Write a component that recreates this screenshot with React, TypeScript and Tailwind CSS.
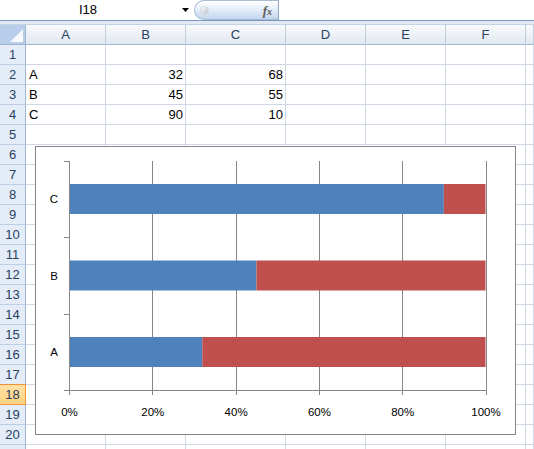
import type { ReactNode } from "react";

const colTemplate = "grid grid-cols-[26px_80px_80px_100px_80px_80px_80px_1fr]";
const columns = ["A", "B", "C", "D", "E", "F", ""];

const data: Record<number, [string, string, string]> = {
  2: ["A", "32", "68"],
  3: ["B", "45", "55"],
  4: ["C", "90", "10"],
};

// row 21 only peeks in at the bottom edge, its number is not visible
const rows = Array.from({ length: 21 }, (_, i) => i + 1);

// chart geometry (relative to chart content box)
const axisX = 33;
const plotW = 416.5;
const axisTop = 14;
const axisBottom = 243;
const categories = [
  { label: "C", center: 52, blue: 90 },
  { label: "B", center: 128.5, blue: 45 },
  { label: "A", center: 205, blue: 32 },
];
const pct = [0, 20, 40, 60, 80, 100];

function Cell({ children, right }: { children?: ReactNode; right?: boolean }) {
  return (
    <div
      className={`h-[20px] border-r border-b border-[#D0D7E5] px-[2px] text-[13px] leading-[19px] text-black whitespace-nowrap overflow-hidden ${
        right ? "text-right" : "text-left pl-[3px]"
      }`}
    >
      {children}
    </div>
  );
}

function BarChart() {
  const xAt = (p: number) => axisX + (plotW * p) / 100;
  return (
    <div className="absolute left-[35px] top-[146px] w-[481px] h-[289px] border border-[#868686] bg-white">
      <svg
        width="479"
        height="287"
        className="block font-['Liberation_Sans',Arial,sans-serif] text-[11.5px]"
      >
        {/* vertical gridlines */}
        {pct.slice(1).map((p) => (
          <line
            key={p}
            x1={Math.round(xAt(p)) + 0.5}
            x2={Math.round(xAt(p)) + 0.5}
            y1={axisTop}
            y2={axisBottom}
            stroke="#868686"
          />
        ))}

        {/* bars */}
        {categories.map((c) => (
          <g key={c.label}>
            <rect x={axisX + 0.5} y={c.center - 15} width={xAt(c.blue) - axisX - 0.5} height={30} fill="#4F81BD" />
            <rect x={xAt(c.blue)} y={c.center - 15} width={xAt(100) - xAt(c.blue)} height={30} fill="#C0504D" />
            <text x={18} y={c.center + 4} textAnchor="middle" fill="#000">
              {c.label}
            </text>
          </g>
        ))}

        {/* vertical axis */}
        <line x1={axisX + 0.5} x2={axisX + 0.5} y1={axisTop} y2={axisBottom} stroke="#868686" />
        {[14, 90, 167, 243].map((y) => (
          <line key={y} x1={28} x2={axisX} y1={y + 0.5} y2={y + 0.5} stroke="#868686" />
        ))}

        {/* horizontal axis */}
        <line x1={29} x2={Math.round(xAt(100)) + 1} y1={axisBottom + 0.5} y2={axisBottom + 0.5} stroke="#868686" />
        {pct.map((p) => (
          <g key={p}>
            <line
              x1={Math.round(xAt(p)) + 0.5}
              x2={Math.round(xAt(p)) + 0.5}
              y1={axisBottom}
              y2={axisBottom + 5}
              stroke="#868686"
            />
            <text x={xAt(p) + 0.5} y={269} textAnchor="middle" fill="#000">
              {p}%
            </text>
          </g>
        ))}
      </svg>
    </div>
  );
}

export default function App() {
  return (
    <div className="relative w-[534px] h-[449px] overflow-hidden bg-white font-['Liberation_Sans',Arial,sans-serif]">
      {/* Formula bar */}
      <div className="flex h-[21px] border-b border-[#7C97BD] bg-white">
        <div className="w-[176px] text-center text-[13px] leading-[20px] text-black">I18</div>
        <div className="w-[18px] flex items-center justify-center">
          <svg width="7" height="4" viewBox="0 0 7 4">
            <path d="M0 0h7L3.5 4z" fill="#000" />
          </svg>
        </div>
        <div className="relative w-[84px] h-[20px] rounded-l-full border border-r-0 border-[#A9BCD6] bg-gradient-to-b from-[#FFFFFF] via-[#E3ECF8] to-[#C3D5ED] flex items-center justify-between pl-[5px] pr-[6px]">
          <span className="w-[9px] h-[9px] rounded-full bg-gradient-to-br from-[#FFFFFF] to-[#B9C2CC] border border-[#D2D9E1]" />
          <span className="font-['Liberation_Serif',serif] italic font-bold text-[13px] leading-none text-[#5A5A5A]">
            f<span className="text-[10px]">x</span>
          </span>
        </div>
        <div className="flex-1 border-l border-[#8DA4C4]" />
      </div>
      <div className="h-[4px] bg-[#E2E9F3] border-b border-[#C4D3E6]" />

      {/* Column headers */}
      <div className={colTemplate}>
        <div className="h-[20px] border-r border-b border-[#9EB6CE] bg-[#B8CDE9] flex items-end justify-end p-[2px]">
          <svg width="13" height="13" viewBox="0 0 13 13">
            <defs>
              <linearGradient id="tri" x1="0" y1="0" x2="1" y2="1">
                <stop offset="0" stopColor="#E6EEF8" />
                <stop offset="1" stopColor="#FFFFFF" />
              </linearGradient>
            </defs>
            <path d="M13 0V13H0z" fill="url(#tri)" />
          </svg>
        </div>
        {columns.map((c, i) => (
          <div
            key={i}
            className="h-[20px] border-r border-b border-r-[#C0CDDD] border-b-[#9EB6CE] bg-gradient-to-b from-[#F9FAFC] to-[#E1E7F0] text-center text-[13px] leading-[19px] text-[#27415F]"
          >
            {c}
          </div>
        ))}
      </div>

      {/* Rows */}
      {rows.map((r) => {
        const d = data[r];
        const selected = r === 18;
        const beforeSelected = r === 17;
        return (
          <div key={r} className={colTemplate}>
            <div
              className={`h-[20px] border-r border-b text-center text-[13px] leading-[19px] text-[#27415F] ${
                selected
                  ? "bg-gradient-to-b from-[#FFE1A6] to-[#FFD27F] border-[#F29436]"
                  : beforeSelected
                    ? "bg-[#E4ECF7] border-r-[#9EB6CE] border-b-[#F29436]"
                    : "bg-[#E4ECF7] border-r-[#9EB6CE] border-b-[#BFCFE3]"
              }`}
            >
              {r <= 20 ? r : null}
            </div>
            <Cell>{d?.[0]}</Cell>
            <Cell right>{d?.[1]}</Cell>
            <Cell right>{d?.[2]}</Cell>
            <Cell />
            <Cell />
            <Cell />
            <Cell />
          </div>
        );
      })}

      <BarChart />
    </div>
  );
}
